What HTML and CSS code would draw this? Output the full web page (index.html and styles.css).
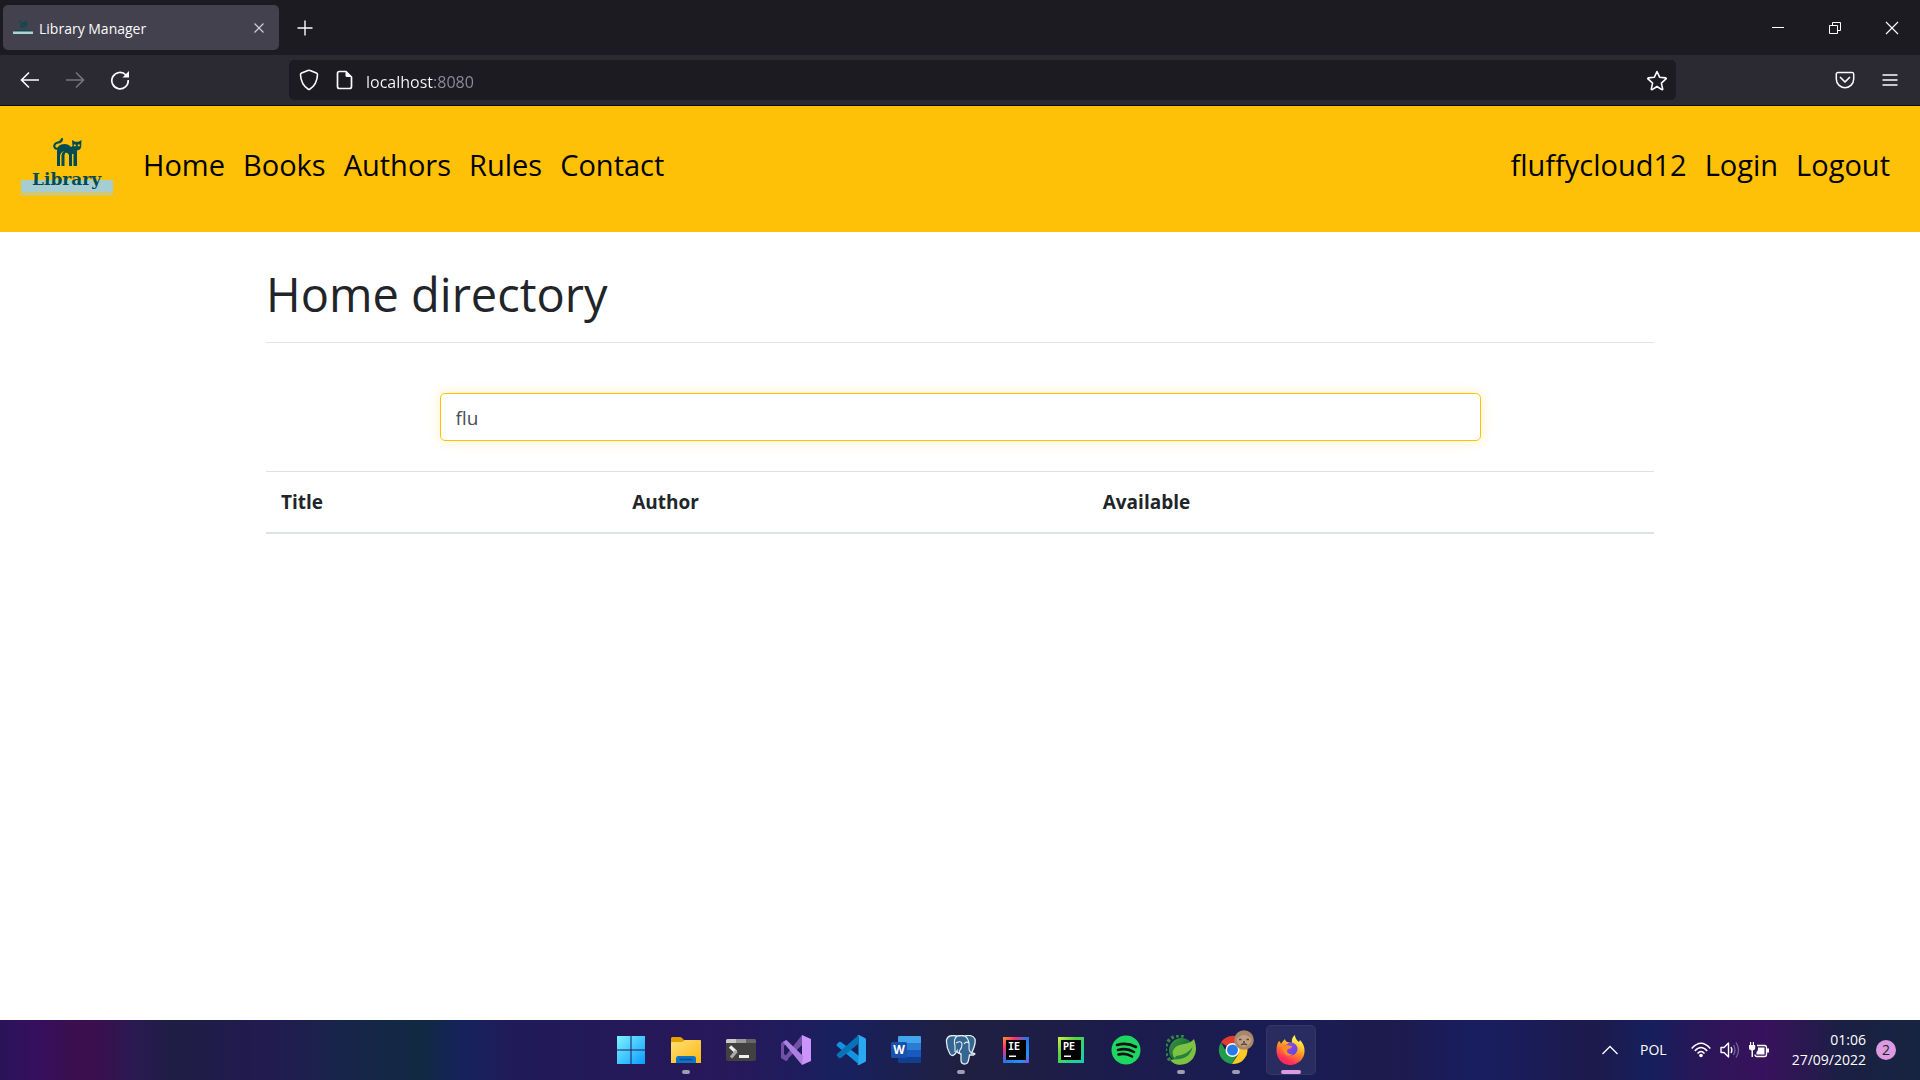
FILE: index.html
```html
<!DOCTYPE html>
<html lang="en">
<head>
<meta charset="utf-8">
<title>Library Manager</title>
<link rel="stylesheet" href="styles.css">
</head>
<body>
<header class="browser">
  <div class="tabs">
    <div class="tab">
      <svg class="favicon" width="20" height="20" viewBox="0 0 20 20" aria-hidden="true"><path d="M7 5q0-2 1-2M8 10V6q2-2 4 0v4M10 6v4M12 4h1.500v3H12z" fill="none" stroke="#0b4a52" stroke-width="1.300"/><path d="M2 12h16v1.500H2z" fill="#0b4a52"/><path d="M0 13.500h20v2.500H0z" fill="#a9d4d4"/></svg>
      <span class="tab-title">Library Manager</span>
      <button class="icon-btn tab-close" aria-label="Close tab"><svg width="10" height="10" viewBox="0 0 10 10"><path d="M.5.5l9 9M9.500.5l-9 9" stroke="#cfcfd8" stroke-width="1.200"/></svg></button>
    </div>
    <button class="icon-btn new-tab" aria-label="New tab"><svg width="16" height="16" viewBox="0 0 16 16"><path d="M8 .5v15M.5 8h15" stroke="#fbfbfe" stroke-width="1.400"/></svg></button>
    <div class="window-controls">
      <button class="icon-btn" aria-label="Minimize"><svg width="12" height="12" viewBox="0 0 12 12"><path d="M0 5.500h12" stroke="#fff"/></svg></button>
      <button class="icon-btn" aria-label="Restore"><svg width="12" height="12" viewBox="0 0 12 12"><path d="M.5 3.500h8v8h-8zM3.500 3.500v-3h8v8h-3" fill="none" stroke="#fff"/></svg></button>
      <button class="icon-btn" aria-label="Close window"><svg width="14" height="14" viewBox="0 0 14 14"><path d="M1 1l12 12M13 1L1 13" stroke="#fff" stroke-width="1.100"/></svg></button>
    </div>
  </div>
  <div class="toolbar">
    <div class="nav-buttons">
      <button class="icon-btn" aria-label="Back"><svg width="20" height="18" viewBox="0 0 20 18"><path d="M19 9H2M9 1.500L1.500 9 9 16.500" fill="none" stroke="#fbfbfe" stroke-width="1.600"/></svg></button>
      <button class="icon-btn" aria-label="Forward"><svg width="20" height="18" viewBox="0 0 20 18"><path d="M1 9h17M11 1.500L18.500 9 11 16.500" fill="none" stroke="#77767f" stroke-width="1.600"/></svg></button>
      <button class="icon-btn" aria-label="Reload"><svg width="20" height="20" viewBox="0 0 20 20"><path d="M16 5A8.200 8.200 0 1 0 18.200 10" fill="none" stroke="#fbfbfe" stroke-width="1.700"/><path d="M19 1v6.500h-6.500z" fill="#fbfbfe"/></svg></button>
    </div>
    <div class="urlbar">
      <svg width="20" height="22" viewBox="0 0 20 22" aria-hidden="true"><path d="M10 1.200q.6 0 1.100.3l6.300 2.500q1.200.5 1.100 1.800Q18 15.500 11 20q-1 .7-2 0Q2 15.500 1.500 5.800 1.400 4.500 2.600 4l6.300-2.500Q9.400 1.200 10 1.200z" fill="none" stroke="#fbfbfe" stroke-width="1.600"/></svg>
      <svg class="page-icon" width="18" height="20" viewBox="0 0 18 20" aria-hidden="true"><path d="M11 1.500H4.500q-2 0-2 2v13q0 2 2 2h10q2 0 2-2V7z" fill="none" stroke="#fbfbfe" stroke-width="1.700"/><path d="M10.500 1l6.500 6h-5q-1.500 0-1.500-1.500z" fill="#fbfbfe"/></svg>
      <input class="address" type="text" value="localhost:8080" aria-label="Address">
      <button class="icon-btn" aria-label="Bookmark this page"><svg width="22" height="21" viewBox="0 0 22 21"><path d="M11 1.500l2.600 5.700 6.200.7q.8.300.2 1l-4.600 4.200 1.300 6q-.1.800-.9.500L11 16.500l-4.800 3.100q-.8.300-.9-.5l1.300-6L2 8.900q-.6-.7.200-1l6.200-.7z" fill="none" stroke="#fbfbfe" stroke-width="1.600" stroke-linejoin="round"/></svg></button>
    </div>
    <div class="tool-buttons">
      <button class="icon-btn" aria-label="Save to Pocket"><svg width="20" height="18" viewBox="0 0 20 18"><path d="M3 1.500h14q1.700 0 1.700 1.700V8a8.700 8.700 0 0 1-17.400 0V3.200Q1.300 1.500 3 1.500z" fill="none" stroke="#fbfbfe" stroke-width="1.500"/><path d="M5.500 6.500L10 11l4.500-4.500" fill="none" stroke="#fbfbfe" stroke-width="1.700" stroke-linecap="round" stroke-linejoin="round"/></svg></button>
      <button class="icon-btn" aria-label="Open application menu"><svg width="16" height="14" viewBox="0 0 16 14"><path d="M.5 2h15M.5 7h15M.5 12h15" stroke="#fbfbfe" stroke-width="1.400"/></svg></button>
    </div>
  </div>
</header>

<nav class="navbar">
  <a class="brand" href="#" aria-label="Library">
    <svg class="logo" width="92" height="60" viewBox="0 0 92 60">
      <path d="M0 44h92v12H0zM0 57h92v2H0z" fill="#a8cdd0"/>
      <path d="M41 3q-.5 3-4 3.500-4 1-3.700 4 1 3.500 5.200 1.500" fill="none" stroke="#034b53" stroke-width="2.200" stroke-linecap="round"/>
      <path d="M36 30V15Q36 8 43.500 8q4 0 6.500 3l1.500-1-.5-6 3 1.800h3.500L60.500 4l-.3 7q-.7 3-4.200 3.500V30h-3.500V18h-1.500v12h-3V19q-.5-2-3-2.500-1.500.5-1.500 3V30h-3V19q.5-3 3-4-4 1-4.500 5v10z" fill="#034b53"/>
      <path d="M52.800 8.500h2v1.800h-2zM56.800 8.500h2v1.800h-2z" fill="#ffc107"/>
      <text class="logo-text" x="11" y="49">Library</text>
    </svg>
  </a>
  <ul class="links">
    <li><a href="#">Home</a></li>
    <li><a href="#">Books</a></li>
    <li><a href="#">Authors</a></li>
    <li><a href="#">Rules</a></li>
    <li><a href="#">Contact</a></li>
  </ul>
  <ul class="links account">
    <li><a href="#">fluffycloud12</a></li>
    <li><a href="#">Login</a></li>
    <li><a href="#">Logout</a></li>
  </ul>
</nav>

<main class="content">
  <h1>Home directory</h1>
  <form class="search"><input class="search-box" type="text" value="flu" aria-label="Search books"></form>
  <table class="books">
    <colgroup><col class="col-title"><col class="col-author"><col></colgroup>
    <thead><tr><th scope="col">Title</th><th scope="col">Author</th><th scope="col">Available</th></tr></thead>
  </table>
</main>

<footer class="taskbar">
  <div class="apps">
    <button class="app" aria-label="Start"><svg width="30" height="30" viewBox="0 0 30 30"><defs><linearGradient id="win" x2="1" y2="1"><stop stop-color="#7df3ff"/><stop offset="1" stop-color="#0a9cff"/></linearGradient></defs><path d="M1 1h13.500v13.500H1zM15.500 1H29v13.500H15.500zM1 15.500h13.500V29H1zM15.500 15.500H29V29H15.500z" fill="url(#win)"/></svg></button>
    <button class="app running" aria-label="File Explorer"><svg width="30" height="30" viewBox="0 0 30 30"><defs><linearGradient id="fold" x2="1" y2="1"><stop stop-color="#ffdf75"/><stop offset="1" stop-color="#fdb813"/></linearGradient></defs><path d="M0 3.500q0-1.500 1.500-1.500H9q1 0 2 1l2 2h15.500Q30 5 30 6.500V10H0z" fill="#e5a100"/><path d="M0 8q0-1 1-1h10l3-2h15q1 0 1 1v22H0z" fill="url(#fold)"/><path d="M5 28v-4.500Q5 21 7.500 21h15q2.500 0 2.500 2.500V28z" fill="#0f74c4"/><path d="M9 24.500h12" stroke="#084a8c" stroke-width="1.300" stroke-linecap="round"/></svg></button>
    <button class="app" aria-label="Terminal"><svg width="30" height="30" viewBox="0 0 30 30"><path d="M0 8h30v16q0 2-2 2H2q-2 0-2-2z" fill="#414141"/><path d="M0 8V5.500Q0 4 1.500 4H10v4z" fill="#cbcbcb"/><path d="M10 4h10v4H10z" fill="#999"/><path d="M20 4h8.500Q30 4 30 5.500V8H20z" fill="#666"/><path d="M4 11.500l6 5.500" stroke="#eee" stroke-width="3.200"/><path d="M10.500 16L5 22.500" stroke="#aaa" stroke-width="3.200"/><path d="M13 20h10v3H13z" fill="#eee"/></svg></button>
    <button class="app" aria-label="Visual Studio"><svg width="30" height="30" viewBox="0 0 30 30"><path d="M0 8l5-3v4L3 11v8l4 3v3l-2 1-5-3z" fill="#7350a8"/><path d="M21 0v10L5 25.500 2 24z" fill="#7350a8"/><path d="M21 0l9 4v22l-9 4z" fill="#ca94fb"/><path d="M2 7l3.500-2L22 21l-1 9z" fill="#ad7fe2"/></svg></button>
    <button class="app" aria-label="Visual Studio Code"><svg width="30" height="30" viewBox="0 0 30 30"><path d="M1 9l2-2q1-.5 2 0l18 14v8.500L1 11q-1-1 0-2z" fill="#1393df"/><path d="M1 19l21-18.500V9L5 23q-1 .7-2 0l-2-2q-1-1 0-2z" fill="#0872b8"/><path d="M21 0q1-.3 2 0l6 3q1 .5 1 1.500v21q0 1-1 1.500l-6 3q-1 .3-2-.5 1.500 0 1.500-1.500V2Q22.500 0 21 0z" fill="#2aa9f3"/></svg></button>
    <button class="app" aria-label="Word"><svg width="30" height="30" viewBox="0 0 30 30"><path d="M8 1h21q1 0 1 1v6H7V2q0-1 1-1z" fill="#41a5ee"/><path d="M7 8h23v7H7z" fill="#2b7cd3"/><path d="M7 15h23v7H7z" fill="#185abd"/><path d="M7 22h23v5q0 1-1 1H8q-1 0-1-1z" fill="#103f91"/><rect y="7" width="16" height="16" rx="1.500" fill="#1753ae"/><text class="word-text" x="8" y="19" text-anchor="middle">W</text></svg></button>
    <button class="app running" aria-label="PostgreSQL"><svg width="32" height="30" viewBox="0 0 32 30"><path d="M12 1Q3-1 1.500 5 1 12 5 19q2 3 5 0l2-3q0 2 4 3v6q0 4 3.500 4t4-4l1-5h4q2-1 1-1.500l-3-.5Q31 9 30 4 27-1 20 1q-4-1-8 0z" fill="#336791" stroke="#e8eef3" stroke-width="1.300"/><path d="M12 1Q8 5 10 11v6M20 1q5 4 4 12 0 4 3 5M11 8q5-3 6 1 0 4-2 6-2 3 1 4M19 9q2-3 5-1" fill="none" stroke="#e8eef3" stroke-width="1.100"/></svg></button>
    <button class="app" aria-label="IntelliJ IDEA"><svg width="26" height="26" viewBox="0 0 26 26"><defs><linearGradient id="ie" x2="1" y2="1"><stop stop-color="#ff9a20"/><stop offset=".25" stop-color="#fe2f70"/><stop offset=".5" stop-color="#2a72e8"/><stop offset=".8" stop-color="#1699f7"/><stop offset="1" stop-color="#8a4cd0"/></linearGradient></defs><path d="M0 0h26v26H0z" fill="url(#ie)"/><path d="M3 3h20v20H3z"/><path d="M6 18.500h7v1.500H6z" fill="#fff"/><text class="jet-text" x="5" y="13">IE</text></svg></button>
    <button class="app" aria-label="PyCharm"><svg width="26" height="26" viewBox="0 0 26 26"><defs><linearGradient id="pe" x2="1" y2="1"><stop stop-color="#d6f14a"/><stop offset=".35" stop-color="#5bd23c"/><stop offset=".7" stop-color="#20d78a"/><stop offset="1" stop-color="#18c9b9"/></linearGradient></defs><path d="M0 0h26v26H0z" fill="url(#pe)"/><path d="M3 3h20v20H3z"/><path d="M6 18.500h7v1.500H6z" fill="#fff"/><text class="jet-text" x="5" y="13">PE</text></svg></button>
    <button class="app" aria-label="Spotify"><svg width="30" height="30" viewBox="0 0 30 30"><circle cx="15" cy="15" r="14.500" fill="#1ed760"/><path d="M6 10q10-3 19 2M7 15q9-2.500 16 2M7.500 19.500q7-2 13.500 2" fill="none" stroke="#111" stroke-width="2.600" stroke-linecap="round"/></svg></button>
    <button class="app running" aria-label="Spring Tools"><svg width="30" height="30" viewBox="0 0 30 30"><defs><linearGradient id="spring" x2="1" y2="1"><stop offset=".2" stop-color="#2f8a3e"/><stop offset=".5" stop-color="#1c6e38"/><stop offset=".8" stop-color="#6db33f"/></linearGradient></defs><path d="M4 25A14 14 0 0 1 19 1.800" fill="none" stroke="#2f8a3e" stroke-width="3.500" stroke-dasharray="2.800 2.200"/><circle cx="15.500" cy="15.500" r="12.500" fill="url(#spring)"/><path d="M28 4q4.500 12-1 19.500-6 7.500-16 6-5-1.500-7-5 3 1 5-1-5-6 0-11 3-3 9-3.500Q25 8 28 4z" fill="#7dc242"/><path d="M8 24.500q16 0 18.500-12.500Q22 19.500 10 21z" fill="#27803c"/></svg></button>
    <button class="app running" aria-label="Chrome"><svg width="36" height="40" viewBox="0 0 36 40"><path d="M15 20L3 12.500A14 14 0 0 1 27 12.500L27.500 14H15z" fill="#e33b2e"/><path d="M3 12.500A14 14 0 0 0 14 34l6-11-11.500-1z" fill="#229b4c"/><path d="M14 34A14 14 0 0 0 28 14H15l6 9z" fill="#fdc922"/><circle cx="14.500" cy="20" r="7" fill="#fff"/><circle cx="14.500" cy="20" r="5.500" fill="#2979e8"/><circle cx="26" cy="10" r="9.800" fill="#a98768"/><path d="M18.500 9q7.500-8 15 0-1 7-7.500 8-6.500-1-7.500-8z" fill="#bfa185"/><path d="M21 9.500h2.500M28.500 9.500H31M25 12h2M23 15q3-2 6 0" fill="none" stroke="#5d4333" stroke-width="1.500"/></svg></button>
    <button class="app running active" aria-label="Firefox"><svg width="30" height="30" viewBox="0 0 30 30"><defs><linearGradient id="fx" x1=".8" x2=".3" y2="1"><stop offset=".15" stop-color="#fff04a"/><stop offset=".5" stop-color="#ff9622"/><stop offset=".85" stop-color="#ff2c5c"/></linearGradient><linearGradient id="fxg" x2="1" y2="1"><stop stop-color="#a249f4"/><stop offset="1" stop-color="#5548d8"/></linearGradient></defs><path d="M3 6q1 0 2 3 1-2 4-5 0 2 2 3l5 1q-1-5 3-8 0 4 4 7l1-2q5 5 4.500 12A14 14 0 1 1 .5 15Q.5 9 3 6z" fill="url(#fx)"/><circle cx="15" cy="14" r="6.500" fill="url(#fxg)"/><path d="M6 9l7 1.500q3 0 3 1.500-1 2-4 2-2 2 0 4 2 2 5 1-3 3-7 1-4-3-4-11z" fill="#ff8a26"/></svg></button>
  </div>
  <div class="tray">
    <button class="icon-btn" aria-label="Show hidden icons"><svg width="16" height="10" viewBox="0 0 16 10"><path d="M.5 9L8 1.500 15.500 9" fill="none" stroke="#fff" stroke-width="1.300"/></svg></button>
    <button class="tray-text">POL</button>
    <button class="icon-btn status" aria-label="Network, volume and battery">
      <svg width="20" height="16" viewBox="0 0 20 16"><path d="M.7 6.500Q10-4 19.300 6.500M3.800 9Q10 2 16.200 9M6.500 11.500q3.500-4 7 0" fill="none" stroke="#fff" stroke-width="1.500"/><circle cx="10" cy="13.500" r="1.800" fill="#fff"/></svg>
      <svg width="20" height="18" viewBox="0 0 20 18"><path d="M1 6.500h3L8.500 2v14L4 11.500H1z" fill="none" stroke="#fff" stroke-width="1.400" stroke-linejoin="round"/><path d="M11 6q1.800 3 0 6" fill="none" stroke="#fff" stroke-width="1.400"/><path d="M13.500 4q3 5 0 10M16 1.500q5 7.500 0 15" fill="none" stroke="#7b6498" stroke-width="1.300"/></svg>
      <svg width="20" height="16" viewBox="0 0 20 16"><path d="M8 3.500h7.500q2 0 2 2v7q0 2-2 2H8q-2 0-2-2" fill="none" stroke="#fff" stroke-width="1.300"/><path d="M9 5.500h6.500v7H7.500V10Q9 9 9 7zM18 6.500h2v4h-2zM0 3h1V0h1.200v3h1.600V0H5v3h1.200v3.500Q6 8 4 8.500V15H2.500V8.500Q0 8 0 6.500z" fill="#fff"/></svg>
    </button>
    <button class="tray-text clock"><time datetime="2022-09-27T01:06">01:06<br>27/09/2022</time></button>
    <span class="badge">2</span>
  </div>
</footer>
</body>
</html>
```
FILE: styles.css
```css
* { box-sizing: border-box; }

body {
  margin: 0;
  min-height: 100vh;
  display: flex;
  flex-direction: column;
  background: #fff;
  color: #212529;
  font-family: "Open Sans", "Noto Sans", sans-serif;
  font-size: 19px;
  line-height: 30px;
}

button, input { font: inherit; color: inherit; }
svg { display: block; flex: none; }
a { color: inherit; text-decoration: none; }

button {
  border: 0;
  padding: 0;
  background: none;
}

.icon-btn {
  display: flex;
  align-items: center;
  justify-content: center;
}

/* Browser window */
.browser {
  border-bottom: 1px solid #0c0c0d;
  background: #2b2a33;
}

.tabs {
  display: flex;
  align-items: center;
  height: 55px;
  padding-left: 3px;
  background: #1c1b22;
}

.tab {
  display: flex;
  align-items: center;
  gap: 6px;
  width: 276px;
  height: 45px;
  padding: 0 10px;
  border-radius: 5px;
  background: #42414d;
  color: #fbfbfe;
  font-size: 14px;
}

.tab-title { flex: 1; padding-top: 2px; }
.tab-close { width: 20px; height: 20px; }
.new-tab { width: 52px; height: 45px; }
.window-controls { display: flex; margin-left: auto; }
.window-controls .icon-btn { width: 57px; height: 54px; }

.toolbar {
  display: flex;
  align-items: center;
  justify-content: space-between;
  height: 50px;
  color: #fbfbfe;
}

.nav-buttons { display: flex; width: 289px; padding-left: 7px; }
.nav-buttons .icon-btn { width: 45px; height: 45px; }

.urlbar {
  flex: 1;
  display: flex;
  align-items: center;
  height: 40px;
  padding: 0 8px 0 10px;
  border-radius: 5px;
  background: #1c1b22;
}

.page-icon { margin: 0 13px 0 16px; }

/* The host is drawn bright, the port dimmed */
.address {
  flex: 1;
  min-width: 0;
  border: 0;
  padding: 3px 0 0;
  outline: 0;
  background: linear-gradient(90deg, #fbfbfe 68px, #8f8e98 68px) text;
  color: transparent;
  font-size: 16px;
}

.tool-buttons {
  display: flex;
  justify-content: flex-end;
  width: 244px;
  padding-right: 8px;
}

.tool-buttons .icon-btn { width: 45px; height: 45px; }

/* Site navigation */
.navbar {
  display: flex;
  align-items: flex-start;
  min-height: 126px;
  padding: 30px 30px 20px 21px;
  background: #ffc107;
  color: #000;
  font-size: 29px;
}

.brand { margin-right: 30px; }

.logo-text {
  fill: #034b53;
  font: bold 17px "DejaVu Serif", serif;
}

.links {
  display: flex;
  gap: 18px;
  margin: 0;
  padding: 14px 0;
  list-style: none;
}

.account { margin-left: auto; }

/* Page content */
.content {
  flex: 1;
  width: 100%;
  max-width: 1388px;
  margin: 0 auto;
}

h1 {
  margin: 0 0 50px;
  padding: 32px 0 18px;
  border-bottom: 1px solid #e4e4e5;
  font-size: 47px;
  font-weight: 400;
  line-height: 60px;
}

.search { display: flex; justify-content: center; margin-bottom: 30px; }

.search-box {
  width: 75%;
  height: 48px;
  padding: 2px 15px 0;
  border: 1px solid #ffc107;
  border-radius: 5px;
  outline: 0;
  box-shadow: 0 0 12px #ffc10744;
  color: #495057;
}

.books { width: 100%; border-collapse: collapse; table-layout: fixed; }
.col-title { width: 25.3%; }
.col-author { width: 33.9%; }

.books th {
  padding: 15px;
  border-top: 1px solid #dee2e6;
  border-bottom: 2px solid #dee2e6;
  text-align: left;
}

/* Desktop taskbar */
.taskbar {
  display: grid;
  grid-template-columns: 1fr auto 1fr;
  align-items: center;
  height: 60px;
  padding-left: 2px;
  background: linear-gradient(90deg, #2a1458, #360f5e 2%, #3b0f4d 4%, #3a0f4e 5%, #2a1a50 7%, #1f1d45 9%, #221b50 14%, #17254a 18%, #112942 22%, #15235c 24%, #211a58 27%, #27185a 38%, #18205e 44%, #1f2040 50%, #1c1c4c 58%, #191d55 68%, #1d1a4c 72%, #181e60 77%, #1c1a4c 83%, #161f5c 86%, #2c1558 89%, #38125c 92%, #2a1850 94%, #1a2044 96%, #172440);
  color: #fff;
}

.apps { display: flex; grid-column: 2; gap: 5px; }

.app {
  position: relative;
  display: flex;
  align-items: center;
  justify-content: center;
  width: 50px;
  height: 50px;
  border-radius: 5px;
}

.running::after {
  content: "";
  position: absolute;
  bottom: 1px;
  width: 8px;
  height: 4px;
  border-radius: 2px;
  background: #9f9cb4;
}

.active { background: #ffffff12; box-shadow: inset 0 0 0 1px #ffffff0d; }
.active::after { width: 20px; background: #dc9be0; }

.word-text { fill: #fff; font: bold 12px "Open Sans", sans-serif; }
.jet-text { fill: #fff; font: bold 10px "DejaVu Sans Mono", monospace; }

.tray {
  display: flex;
  align-items: center;
  justify-content: flex-end;
  padding-right: 24px;
  font-size: 14px;
}

.tray-text { margin-left: 22px; }
.status { gap: 9px; margin-left: 24px; }
.clock { margin-left: 23px; text-align: right; line-height: 20px; }

.badge {
  width: 20px;
  height: 20px;
  margin-left: 10px;
  border-radius: 50%;
  background: #dc9be0;
  color: #222;
  font-size: 14px;
  line-height: 20px;
  text-align: center;
}
```
